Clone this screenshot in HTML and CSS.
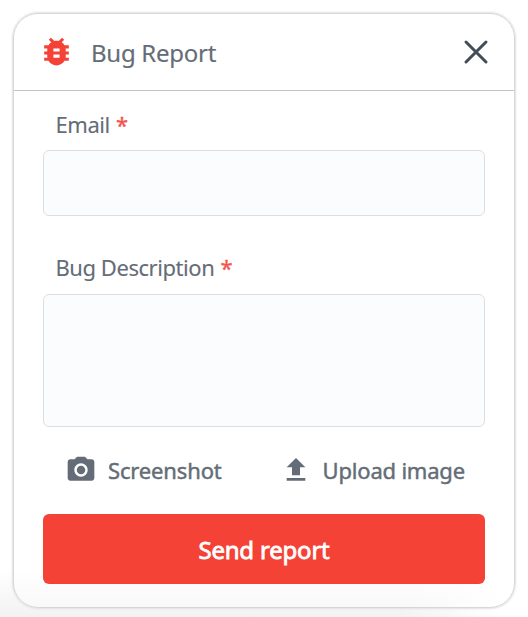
FILE: index.html
```html
<!DOCTYPE html>
<html lang="en">
<head>
<meta charset="utf-8">
<title>Bug Report</title>
<link rel="stylesheet" href="styles.css">
</head>
<body>
<form class="card">
  <header class="header">
    <svg class="bug" viewBox="0 0 24 24"><path d="M20 8h-2.81c-.45-.78-1.07-1.45-1.82-1.96L17 4.41 15.59 3l-2.17 2.17C12.96 5.06 12.49 5 12 5s-.96.06-1.41.17L8.41 3 7 4.41l1.62 1.63C7.88 6.55 7.26 7.22 6.81 8H4v2h2.09c-.05.33-.09.66-.09 1v1H4v2h2v1c0 .34.04.67.09 1H4v2h2.81c1.04 1.79 2.97 3 5.19 3s4.15-1.21 5.19-3H20v-2h-2.09c.05-.33.09-.66.09-1v-1h2v-2h-2v-1c0-.34-.04-.67-.09-1H20V8zm-6 8h-4v-2h4v2zm0-4h-4v-2h4v2z"/></svg>
    <h1 class="title">Bug Report</h1>
    <button class="close" type="button" aria-label="Close"><svg viewBox="0 0 24 24"><path d="M2 2 22 22M22 2 2 22"/></svg></button>
  </header>
  <div class="content">
    <label class="label" for="email">Email <span class="required">*</span></label>
    <input class="field email" id="email" type="email">
    <label class="label second" for="description">Bug Description <span class="required">*</span></label>
    <textarea class="field description" id="description"></textarea>
    <div class="actions">
      <button class="action" type="button">
        <svg viewBox="0 0 24 24"><circle cx="12" cy="12" r="3.2"/><path d="M9 2 7.17 4H4c-1.1 0-2 .9-2 2v12c0 1.1.9 2 2 2h16c1.1 0 2-.9 2-2V6c0-1.1-.9-2-2-2h-3.17L15 2H9zm3 15c-2.76 0-5-2.24-5-5s2.24-5 5-5 5 2.24 5 5-2.24 5-5 5z"/></svg>
        <span>Screenshot</span>
      </button>
      <button class="action upload" type="button">
        <svg viewBox="0 0 24 24"><path d="M9 16h6v-6h4l-7-7-7 7h4v6zm-4 2h14v2H5v-2z"/></svg>
        <span>Upload image</span>
      </button>
    </div>
    <button class="send" type="button">Send report</button>
  </div>
</form>
</body>
</html>
```
FILE: styles.css
```css
* { box-sizing: border-box; }
body {
  margin: 0;
  height: 617px;
  padding: 13px 13px 0;
  overflow: hidden;
  background: linear-gradient(to right, rgba(255,255,255,0) 400px, #fff 500px), linear-gradient(to bottom, #fff 570px, #f2f2f2 617px);
  font-family: "Noto Sans", sans-serif;
  color: #646d77;
}
button { padding: 0; border: 0; background: none; font: inherit; color: inherit; }
.card {
  width: 502px;
  height: 595px;
  border: 1px solid #d4d7db;
  border-radius: 25px;
  box-shadow: 0 0 2px 1px #dfe1e4;
  background: linear-gradient(to right, rgba(255,255,255,0) 400px, #fff 490px), linear-gradient(to bottom, #fff 555px, #f9f9f9 100%);
}
.header {
  height: 77px;
  display: flex;
  align-items: center;
  padding: 0 26.5px 0 23.5px;
  border-bottom: 1px solid #c0c4c9;
}
.bug { width: 37px; height: 37px; margin-top: -1px; fill: #f44336; }
.title { margin: 2px 0 0 16.5px; font-size: 24px; line-height: 32px; font-weight: 400; letter-spacing: -.27px; -webkit-text-stroke: .15px currentColor; }
.close { width: 24px; height: 24px; margin: 0 0 0 auto; }
.close svg { display: block; width: 24px; height: 24px; overflow: visible; fill: none; stroke: #424c57; stroke-width: 3; stroke-linecap: round; }
.content { padding: 17px 29px 0; }
.label { display: block; height: 32px; margin: 0; padding: 0 12.5px; font-size: 22px; line-height: 32px; letter-spacing: -.45px; -webkit-text-stroke: .1px currentColor; }
.required { margin-left: 1px; color: #f4534e; -webkit-text-stroke: .35px currentColor; }
.field { display: block; width: 442px; margin: 10px 0 0; border: 1px solid #dadfe4; border-radius: 6px; background: #fbfcfe; resize: none; outline: none; }
.email { height: 66px; }
.second { margin-top: 35px; }
.description { height: 133px; margin-top: 11px; }
.actions { display: flex; height: 32px; margin: 27px 0 28px 22px; }
.action { display: flex; align-items: center; gap: 11px; font-size: 22px; line-height: 32px; letter-spacing: -.15px; -webkit-text-stroke: .45px currentColor; }
.action svg { width: 32px; height: 32px; fill: #646d77; stroke: none; }
.upload { margin-left: 58px; letter-spacing: -.2px; }
.send { display: block; width: 442px; height: 70px; border-radius: 6px; background: #f44336; color: #fff; font-size: 24px; line-height: 71px; letter-spacing: -.2px; -webkit-text-stroke: .8px #fff; }
```
